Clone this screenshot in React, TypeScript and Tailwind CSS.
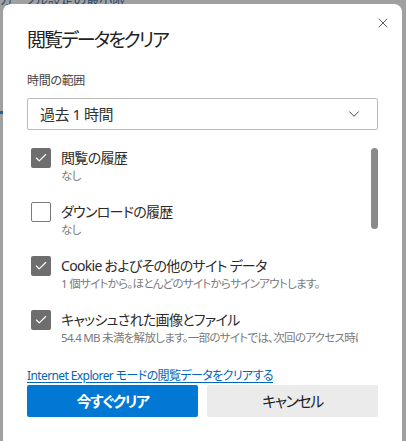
import { Check, X, ChevronDown } from 'lucide-react';

const items = [
  { label: '閲覧の履歴', sub: 'なし', checked: true },
  { label: 'ダウンロードの履歴', sub: 'なし', checked: false },
  { label: 'Cookie およびその他のサイト データ', sub: '1 個サイトから。ほとんどのサイトからサインアウトします。', checked: true },
  { label: 'キャッシュされた画像とファイル', sub: '54.4 MB 未満を解放します。一部のサイトでは、次回のアクセス時に読み込みが遅くなる可能性があります。', checked: true },
];

export default function App() {
  return (
    <div
      className="relative w-[406px] h-[441px] overflow-hidden bg-[#a0a0a0] [font-feature-settings:'palt']"
      style={{ fontFamily: '"Noto Sans", "Noto Sans CJK JP", sans-serif' }}
    >
      {/* page behind the overlay */}
      <div className="absolute left-0 top-[-9px] text-[13px] leading-[16px] text-[#2c4a6e] whitespace-nowrap">
        カーソル設定の最小限
      </div>
      <div className="absolute left-0 top-[111px] w-[3px] h-[3px] bg-[#1f5f9c]" />

      {/* dialog */}
      <div className="absolute left-[3px] top-[4px] w-[399px] h-[446px] bg-white rounded-[8px] px-[24px] pt-[22px]">
        <button className="absolute right-[11px] top-[11px] text-[#333]">
          <X size={16} strokeWidth={1.2} />
        </button>

        <h1 className="text-[19px] leading-[28px] tracking-[-2px] text-[#222] font-normal">閲覧データをクリア</h1>

        <p className="mt-[18px] text-[12px] leading-[18px] tracking-[-0.3px] text-[#444]">時間の範囲</p>

        <div className="mt-[8px] h-[32px] w-[351px] border border-[#bcbcbc] rounded-[2px] flex items-center justify-between pl-[12px] pr-[14px]">
          <span className="text-[15px] tracking-[-0.5px] text-[#333]">過去 1 時間</span>
          <ChevronDown size={18} strokeWidth={1.2} className="text-[#333]" />
        </div>

        {/* scroll area */}
        <div className="relative mt-[18px] h-[200px] w-[351px] overflow-hidden">
          <div className="flex flex-col gap-[18px] pl-[4px] pr-[20px]">
            {items.map(it => (
              <div key={it.label} className="flex gap-[10px]">
                {it.checked ? (
                  <div className="shrink-0 w-[20px] h-[20px] rounded-[2px] bg-[#6e6e6e] flex items-center justify-center">
                    <Check size={14} strokeWidth={2} className="text-white" />
                  </div>
                ) : (
                  <div className="shrink-0 w-[20px] h-[20px] rounded-[2px] border border-[#7a7a7a] bg-white" />
                )}
                <div className="min-w-0 flex-1 overflow-hidden">
                  <p className="text-[14px] leading-[20px] tracking-[-0.7px] text-[#2b2b2b] whitespace-nowrap">{it.label}</p>
                  <p className="text-[11.5px] leading-[16px] tracking-[-0.7px] text-[#7a7a7a] whitespace-nowrap overflow-hidden">{it.sub}</p>
                </div>
              </div>
            ))}
          </div>
          <div className="absolute right-[0px] top-0 w-[7px] h-[81px] rounded-full bg-[#8a8a8a]" />
        </div>

        <a className="block mt-[20px] w-fit text-[12px] leading-[15px] tracking-[-0.6px] text-[#0067b8] underline underline-offset-2 whitespace-nowrap">
          Internet Explorer モードの閲覧データをクリアする
        </a>

        <div className="mt-[2px] flex gap-[9px]">
          <button className="w-[171px] h-[32px] rounded-[2px] bg-[#0078d4] text-white text-[15px] tracking-[-1.5px] font-bold">今すぐクリア</button>
          <button className="w-[171px] h-[32px] rounded-[2px] bg-[#ebebeb] text-[#222] text-[15px] tracking-[-1.5px]">キャンセル</button>
        </div>
      </div>
    </div>
  );
}
